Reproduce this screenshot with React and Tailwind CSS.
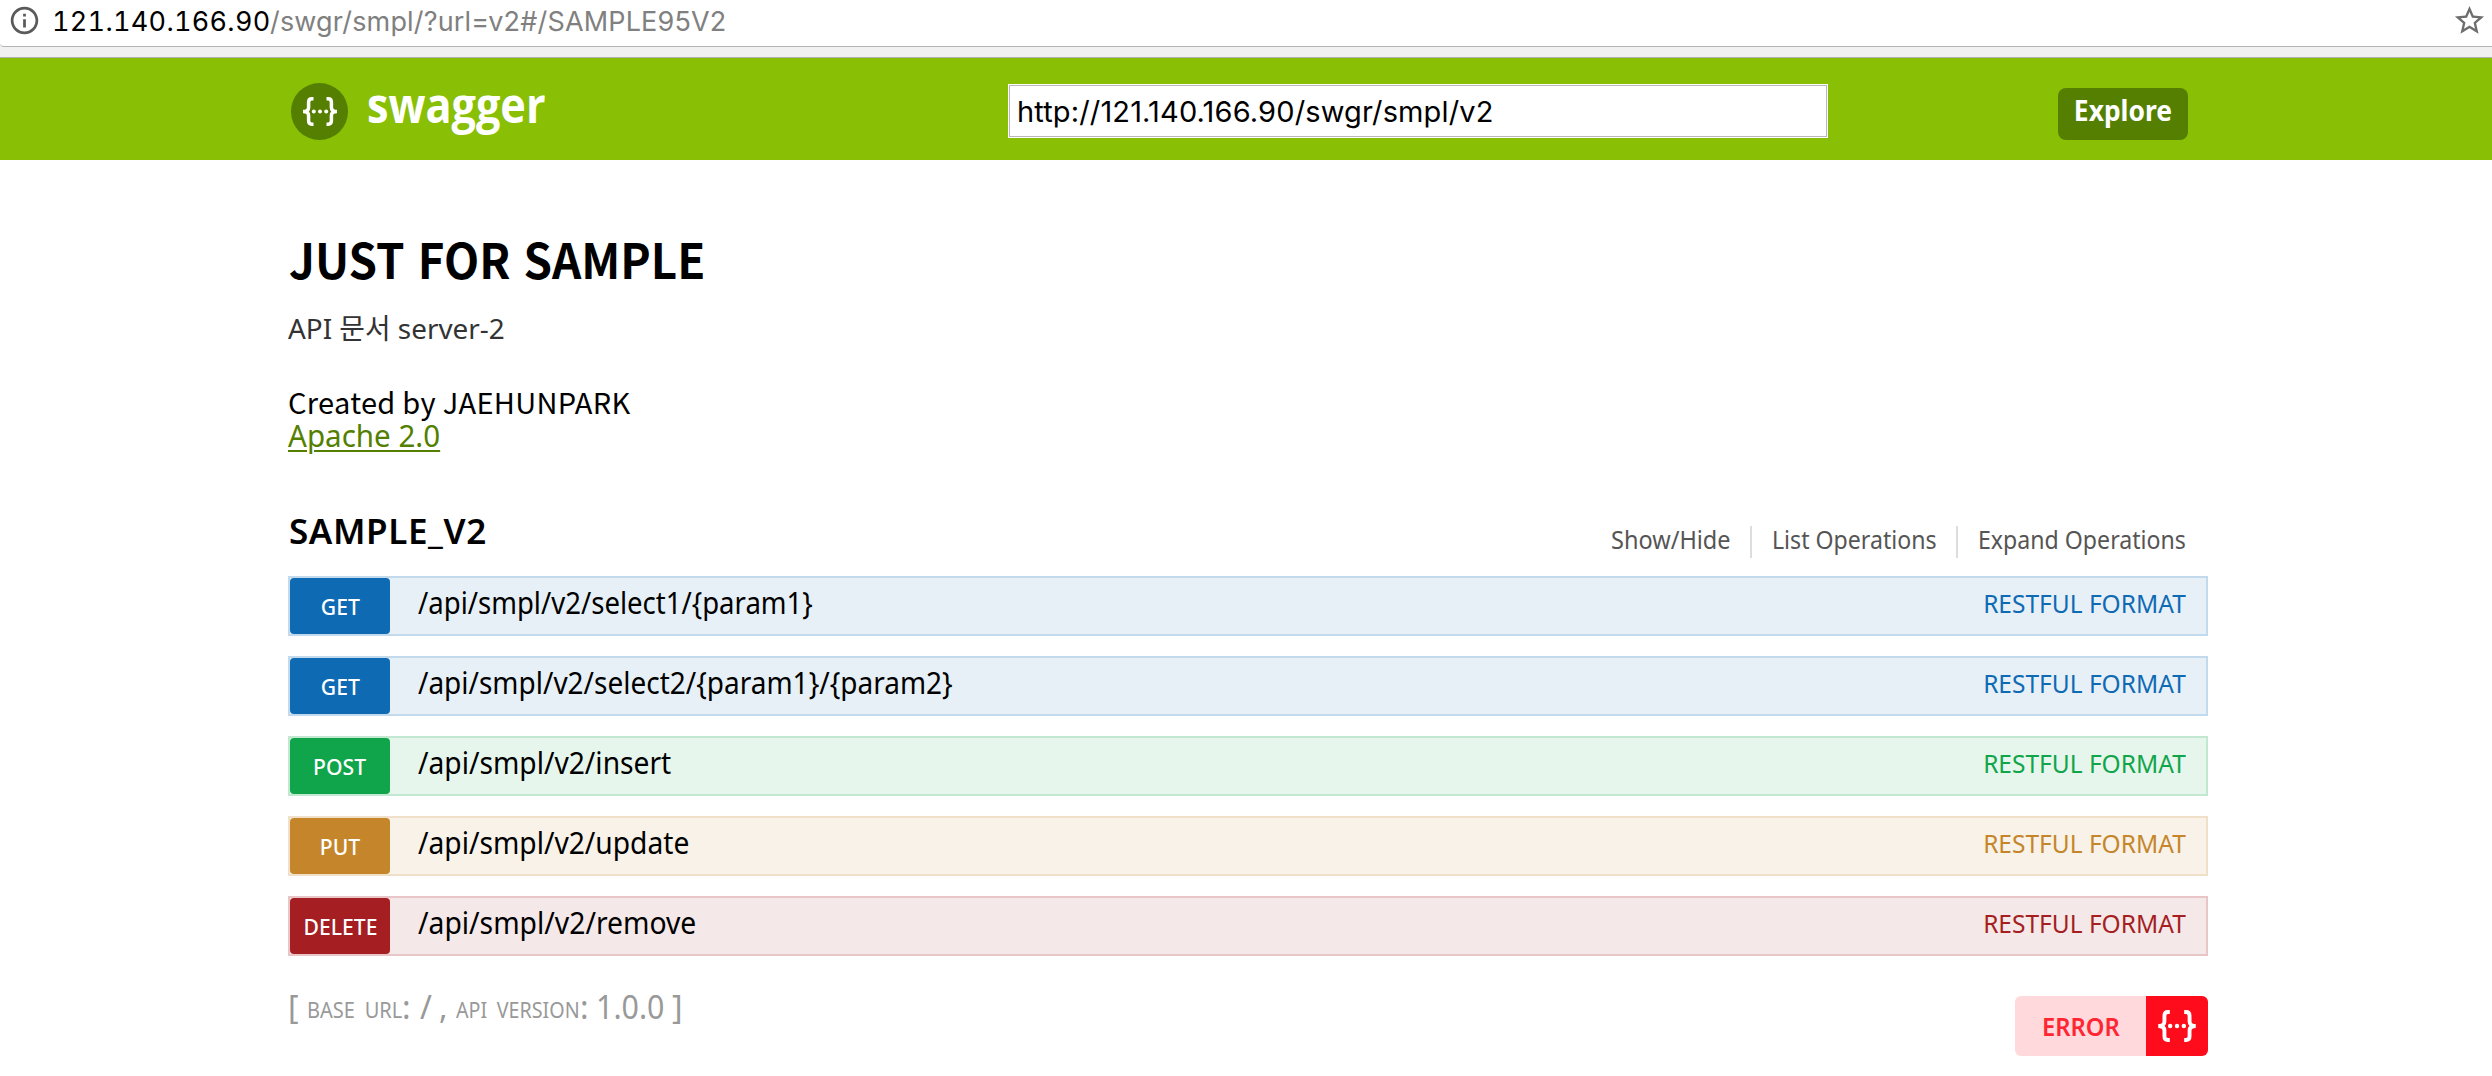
import { MdInfoOutline, MdStarBorder } from "react-icons/md";

const operations = [
  { method: "GET", path: "/api/smpl/v2/select1/{param1}", fit: "scale-x-[0.918]", row: "border-[#c3d9ec] bg-[#e7f0f7]", badge: "bg-[#0f6ab4]", text: "text-[#0f6ab4]" },
  { method: "GET", path: "/api/smpl/v2/select2/{param1}/{param2}", fit: "scale-x-[0.933]", row: "border-[#c3d9ec] bg-[#e7f0f7]", badge: "bg-[#0f6ab4]", text: "text-[#0f6ab4]" },
  { method: "POST", path: "/api/smpl/v2/insert", fit: "scale-x-[0.94]", row: "border-[#c3e8d1] bg-[#e7f6ec]", badge: "bg-[#10a54a]", text: "text-[#10a54a]" },
  { method: "PUT", path: "/api/smpl/v2/update", fit: "scale-x-[0.94]", row: "border-[#f0e0ca] bg-[#f9f2e9]", badge: "bg-[#c5862b]", text: "text-[#c5862b]" },
  { method: "DELETE", path: "/api/smpl/v2/remove", fit: "scale-x-[0.943]", row: "border-[#e8c6c7] bg-[#f5e8e8]", badge: "bg-[#a41e22]", text: "text-[#a41e22]" },
];

function Braces({ className }) {
  return (
    <svg viewBox="0 0 36 29" className={className} fill="none" stroke="white" strokeWidth="3.5">
      <path d="M11.5 1.8H9.8Q6.6 1.8 6.6 5.2V10.4Q6.6 14.5 1 14.5Q6.6 14.5 6.6 18.6V23.8Q6.6 27.2 9.8 27.2H11.5" />
      <path d="M24.5 1.8H26.2Q29.4 1.8 29.4 5.2V10.4Q29.4 14.5 35 14.5Q29.4 14.5 29.4 18.6V23.8Q29.4 27.2 26.2 27.2H24.5" />
      <g fill="white" stroke="none">
        <circle cx="11.8" cy="14.5" r="2" />
        <circle cx="18" cy="14.5" r="2" />
        <circle cx="24.2" cy="14.5" r="2" />
      </g>
    </svg>
  );
}

function AddressBar() {
  return (
    <div className="h-[58px] border-b border-[#b0b0b0] bg-[#f1f1f1]">
      <div className="flex h-[47px] items-start rounded-bl-[4px] border-b border-[#b4b4b4] bg-white pl-[8px] pr-[5px] font-[Inter,sans-serif] text-[27px] leading-[43px]">
        <MdInfoOutline className="mt-[4px] size-[33px] shrink-0 text-[#5a5a5a]" />
        <span className="ml-[11px] w-[218px] tracking-[0.3px] tabular-nums">121.140.166.90</span>
        <span className="tracking-[0.17px] text-[#808080]">/swgr/smpl/?url=v2#/SAMPLE95V2</span>
        <MdStarBorder className="ml-auto mt-[3px] size-[35px] shrink-0 text-[#6e6e6e]" />
      </div>
    </div>
  );
}

function Header() {
  return (
    <header className="flex h-[102px] items-start bg-[#89bf04] pl-[291px]">
      <div className="mt-[25px] flex size-[57px] items-center justify-center rounded-full bg-[#547f00]">
        <Braces className="h-[29px] w-[36px]" />
      </div>
      <div className="ml-[19px] mt-[23px] w-[641px] font-['Open_Sans',sans-serif] text-[48px] font-bold leading-[48px] text-white">
        <span className="inline-block origin-left scale-x-[0.9]">swagger</span>
      </div>
      <div className="mt-[26px] h-[54px] w-[820px] bg-white p-px">
        <div className="h-[52px] border border-[#b8b8b8] pl-[7px] font-[Inter,sans-serif] text-[29px] leading-[51px] tracking-[0.14px]">
          http://121.140.166.90/swgr/smpl/v2
        </div>
      </div>
      <button className="ml-[230px] mt-[30px] flex h-[52px] w-[130px] justify-center rounded-[8px] bg-[#547f00] text-[29px] font-bold leading-[44px] text-white">
        <span className="scale-x-[0.91]">Explore</span>
      </button>
    </header>
  );
}

function Operation({ op }) {
  return (
    <li className={`flex h-[60px] items-start justify-between border-2 pr-[20px] ${op.row}`}>
      <div className="flex">
        <div className={`flex h-[56px] w-[100px] justify-center rounded-[4px] text-[22px] font-medium leading-[57px] text-white ${op.badge}`}>
          <span className="scale-x-[0.96]">{op.method}</span>
        </div>
        <span className={`ml-[28px] origin-left whitespace-nowrap text-[30px] leading-[50px] ${op.fit}`}>{op.path}</span>
      </div>
      <span className={`origin-right scale-x-[0.98] text-[25px] leading-[50px] ${op.text}`}>RESTFUL FORMAT</span>
    </li>
  );
}

function ApiInfo() {
  return (
    <p className="flex whitespace-nowrap text-[32px] leading-[22px] text-[#999]">
      <span className="w-[19px]">[</span>
      <span className="w-[95px] text-[22px] leading-[27px]">
        <span className="inline-block origin-left scale-x-[0.91] [word-spacing:5px]">BASE URL</span>
      </span>
      <span className="w-[18px]">:</span>
      <span className="w-[19px]">/</span>
      <span className="w-[17px]">,</span>
      <span className="w-[124px] text-[22px] leading-[27px]">
        <span className="inline-block origin-left scale-x-[0.895] [word-spacing:5px]">API VERSION</span>
      </span>
      <span className="w-[16px]">:</span>
      <span className="w-[76px]">
        <span className="inline-block origin-left scale-x-[0.95]">1.0.0</span>
      </span>
      <span>]</span>
    </p>
  );
}

export default function App() {
  return (
    <div className="min-h-[1076px] bg-white font-['Noto_Sans','Noto_Sans_CJK_KR',sans-serif] text-black">
      <AddressBar />
      <Header />
      <main className="ml-[288px] w-[1920px]">
        <h1 className="h-[124px] origin-left scale-x-[0.952] pl-px pt-[73px] font-['Noto_Sans_CJK_KR',sans-serif] text-[48px] font-semibold leading-[50px] [word-spacing:3px]">JUST FOR SAMPLE</h1>
        <p className="mt-[30px] h-[28px] origin-left scale-x-[0.995] text-[28px] leading-[28px] text-[#333]">API 문서 server-2</p>
        <div className="mt-[44px] text-[30px] leading-[33px]">
          <p className="h-[33px] font-['Noto_Sans_CJK_KR',sans-serif] text-[29px] leading-[31px] tracking-[0.3px]">Created by JAEHUNPARK</p>
          <p>
            <a className="inline-block origin-left scale-x-[0.985] text-[#547f00] underline decoration-2 underline-offset-[3px]">Apache 2.0</a>
          </p>
        </div>
        <div className="mt-[60px] flex h-[64px] items-start justify-between pr-[20px]">
          <h2 className="pl-px text-[35px] font-semibold leading-[37px] tracking-[0.6px]">SAMPLE_V2</h2>
          <ul className="mt-[14px] flex h-[32px] text-[25px] leading-[26px] text-[#555]">
            <li className="w-[139px] whitespace-nowrap"><span className="inline-block origin-left scale-x-[0.94]">Show/Hide</span></li>
            <li className="w-[206px] whitespace-nowrap border-l-2 border-[#ddd] pl-[20px]"><span className="inline-block origin-left scale-x-[0.925]">List Operations</span></li>
            <li className="w-[232px] whitespace-nowrap border-l-2 border-[#ddd] pl-[20px]"><span className="inline-block origin-left scale-x-[0.925]">Expand Operations</span></li>
          </ul>
        </div>
        <ul className="flex flex-col gap-[20px]">
          {operations.map((op) => (
            <Operation key={op.path} op={op} />
          ))}
        </ul>
        <footer className="mt-[40px] flex h-[60px] items-start justify-between">
          <ApiInfo />
          <div className="flex h-[60px] w-[193px] overflow-hidden rounded-[6px] bg-[#ffd9dc]">
            <span className="flex w-[131px] justify-center text-[25px] font-semibold leading-[61px] text-[#ff2633]">
              <span className="scale-x-[0.95]">ERROR</span>
            </span>
            <span className="flex w-[62px] items-center justify-center bg-[#ff0c1c]">
              <Braces className="h-[32px] w-[40px]" />
            </span>
          </div>
        </footer>
      </main>
    </div>
  );
}
